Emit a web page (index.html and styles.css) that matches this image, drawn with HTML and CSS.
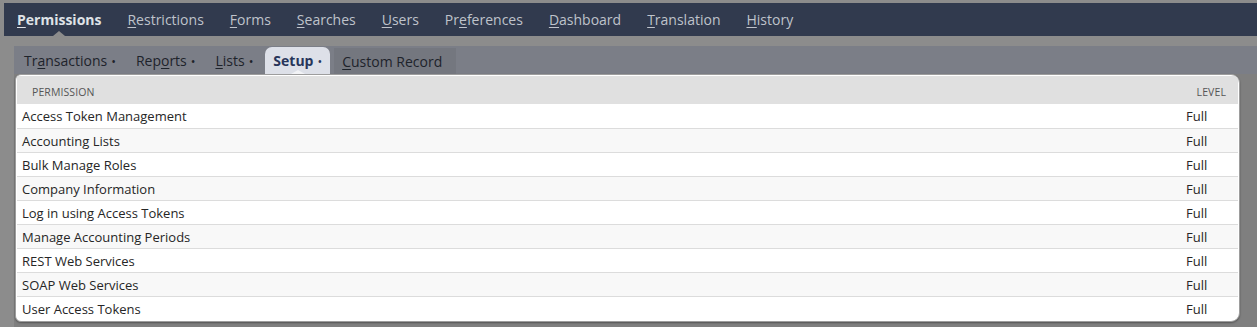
FILE: index.html
```html
<!DOCTYPE html>
<html lang="en">

<head>
    <meta charset="UTF-8" />
    <meta name="viewport" content="width=device-width, initial-scale=1.0" />
    <title>Role Permissions</title>
    <link rel="stylesheet" href="styles.css">
</head>

<body>
    <div class="topnav">
        <a class="nav-item active"><u>P</u>ermissions</a>
        <a class="nav-item"><u>R</u>estrictions</a>
        <a class="nav-item"><u>F</u>orms</a>
        <a class="nav-item"><u>S</u>earches</a>
        <a class="nav-item"><u>U</u>sers</a>
        <a class="nav-item">Pr<u>e</u>ferences</a>
        <a class="nav-item"><u>D</u>ashboard</a>
        <a class="nav-item"><u>T</u>ranslation</a>
        <a class="nav-item"><u>H</u>istory</a>
    </div>
    <div class="subwrap">
        <div class="subtabs">
            <a class="tab">Tr<u>a</u>nsactions<span class="dot">•</span></a>
            <a class="tab">Rep<u>o</u>rts<span class="dot">•</span></a>
            <a class="tab"><u>L</u>ists<span class="dot">•</span></a>
            <a class="tab current">Setup<span class="dot">•</span></a>
            <a class="tab plain"><u>C</u>ustom Record</a>
        </div>
        <div class="content">
            <div class="card">
                <table class="perms">
                    <thead>
                        <tr>
                            <th class="col-name">Permission</th>
                            <th class="col-level">Level</th>
                        </tr>
                    </thead>
                    <tbody>
                        <tr><td>Access Token Management</td><td class="lvl">Full</td></tr>
                        <tr><td>Accounting Lists</td><td class="lvl">Full</td></tr>
                        <tr><td>Bulk Manage Roles</td><td class="lvl">Full</td></tr>
                        <tr><td>Company Information</td><td class="lvl">Full</td></tr>
                        <tr><td>Log in using Access Tokens</td><td class="lvl">Full</td></tr>
                        <tr><td>Manage Accounting Periods</td><td class="lvl">Full</td></tr>
                        <tr><td>REST Web Services</td><td class="lvl">Full</td></tr>
                        <tr><td>SOAP Web Services</td><td class="lvl">Full</td></tr>
                        <tr><td>User Access Tokens</td><td class="lvl">Full</td></tr>
                    </tbody>
                </table>
            </div>
        </div>
    </div>
</body>

</html>
```

FILE: styles.css
```css
* {
    box-sizing: border-box;
    margin: 0;
    padding: 0;
}

body {
    background-color: #8c8c8c;
    font-family: "Open Sans", "Liberation Sans", sans-serif;
    padding-top: 3px;
    padding-left: 4px;
    height: 327px;
    overflow: hidden;
}

u {
    text-decoration: underline;
    text-underline-offset: 2px;
}

/* barra principal */
.topnav {
    display: flex;
    height: 33px;
    background-color: #313a4e;
    align-items: center;
}

.nav-item {
    position: relative;
    padding: 1px 13px 0;
    font-size: 14px;
    color: #bfc3cb;
    line-height: 32px;
    white-space: nowrap;
}

.nav-item.active {
    font-weight: bold;
    color: #dfe2e7;
}

.nav-item.active::after {
    content: "";
    position: absolute;
    left: 50%;
    bottom: 0;
    margin-left: -6px;
    border-left: 6px solid transparent;
    border-right: 6px solid transparent;
    border-bottom: 5px solid #8c8c8c;
}

/* subpestañas */
.subwrap {
    margin-top: 10px;
    margin-left: 10px;
}

.subtabs {
    display: flex;
    align-items: flex-end;
    gap: 4px;
    height: 28px;
    padding-left: 2px;
    background-color: #7b7e87;
}

.tab {
    position: relative;
    padding: 1px 8px 0;
    font-size: 14px;
    line-height: 25px;
    color: #1e232b;
    white-space: nowrap;
}

.dot {
    font-size: 12.5px;
    margin-left: 4px;
}

.tab.current {
    background-color: #dde0e8;
    border-radius: 7px 7px 0 0;
    font-weight: bold;
    color: #27355a;
}

.tab.current .dot {
    font-weight: normal;
}

.tab.current::after {
    content: "";
    position: absolute;
    left: 50%;
    bottom: 0;
    margin-left: -7px;
    border-left: 7px solid transparent;
    border-right: 7px solid transparent;
    border-bottom: 4px solid #f2f3f6;
}

.tab.plain {
    background-color: #74777f;
    padding-right: 14px;
}

/* contenido */
.content {
    background-color: #7f7f7f;
    padding: 0 17px 5px 1px;
}

.card {
    background-color: #fff;
    border: 1px solid #9d9d9d;
    border-radius: 6px 9px 9px 6px;
    padding: 1px;
    box-shadow: 0 1px 2px rgba(0, 0, 0, 0.35);
    overflow: hidden;
}

.perms {
    width: 100%;
    border-collapse: collapse;
}

.perms th {
    background-color: #e0e0e0;
    height: 28px;
    padding-top: 3px;
    font-size: 10.5px;
    font-weight: normal;
    text-transform: uppercase;
    color: #555;
    letter-spacing: 0.1px;
}

.col-name {
    text-align: left;
    padding-left: 15px;
}

.col-level {
    text-align: right;
    padding-right: 12px;
    width: 52px;
}

.perms td {
    height: 24px;
    padding-top: 1px;
    font-size: 13px;
    color: #262626;
    padding-left: 5px;
    border-bottom: 1px solid #dcdcdc;
}

.perms tbody tr:nth-child(even) td {
    background-color: #f8f8f8;
}

.perms tbody tr:last-child td {
    border-bottom: none;
}

.perms td.lvl {
    padding-left: 0;
}
```
